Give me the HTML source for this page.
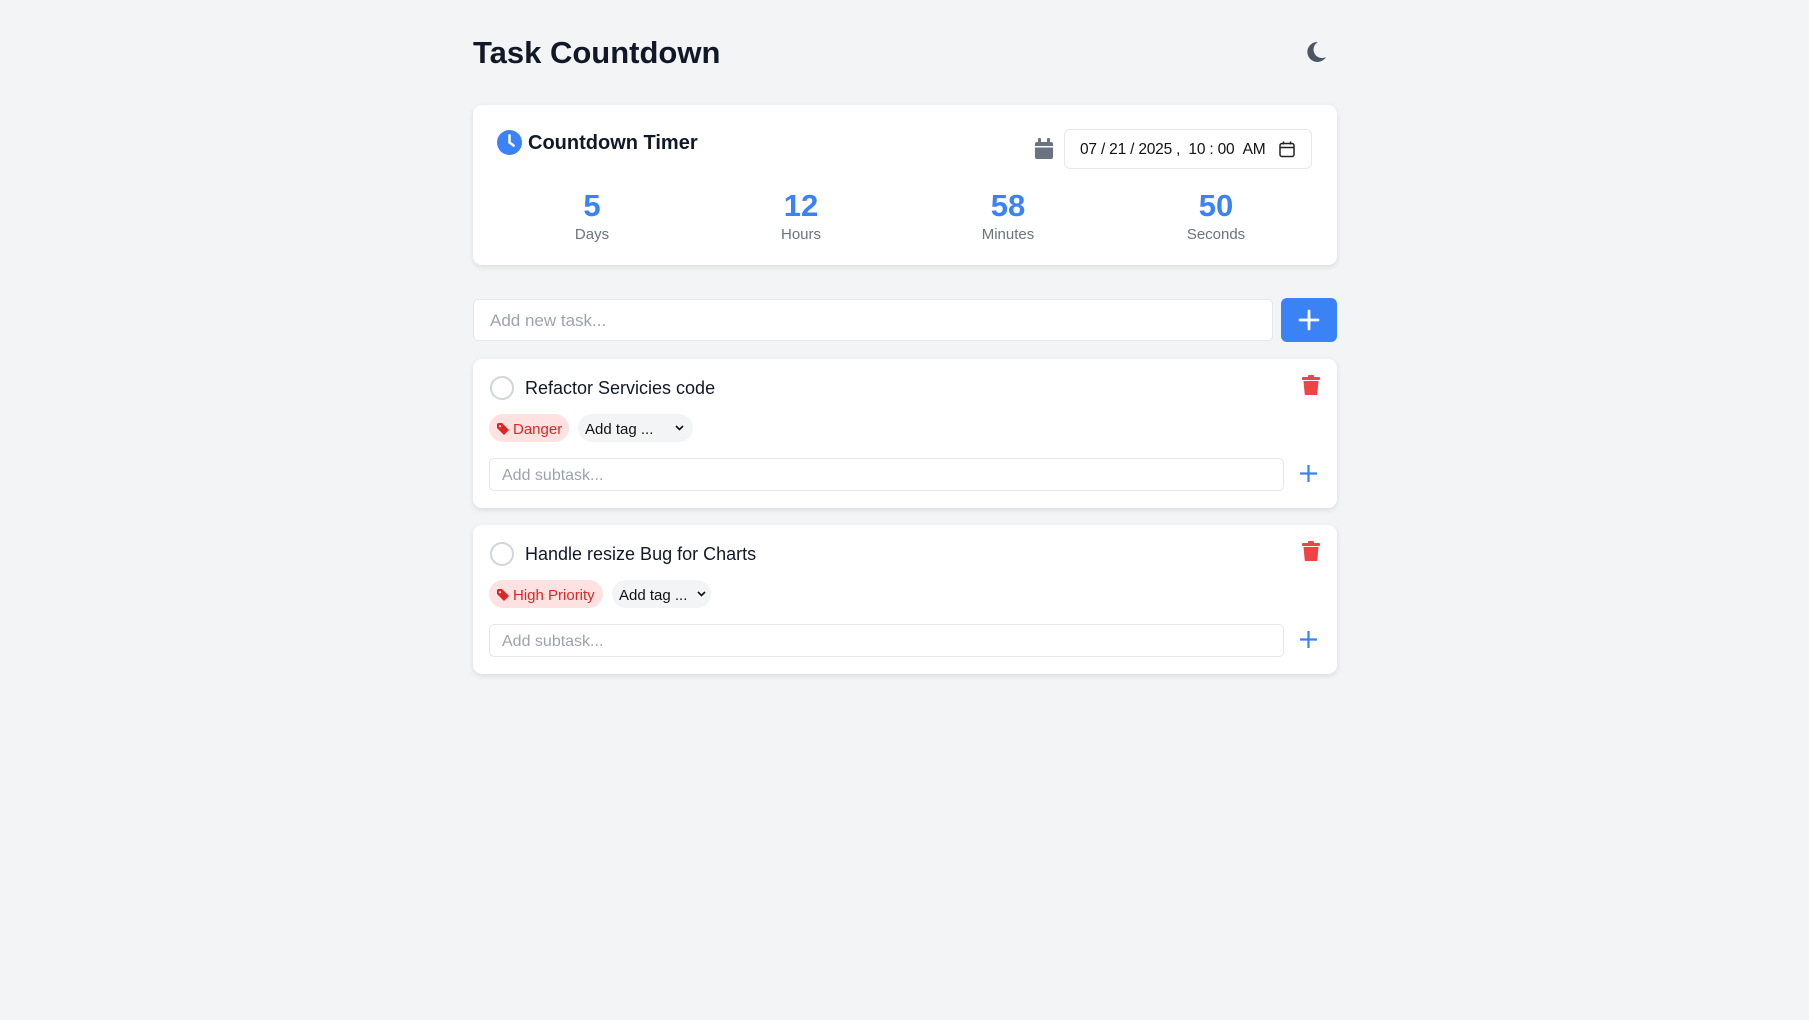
<!DOCTYPE html>
<html><head><meta charset="utf-8"><style>
*{box-sizing:border-box;margin:0;padding:0}
body{width:1809px;height:1020px;background:#f3f4f6;font-family:"Liberation Sans",sans-serif;position:relative;overflow:hidden;color:#111827}
.a{position:absolute}
.card{position:absolute;left:473px;width:864px;background:#fff;border-radius:9px;box-shadow:0 2px 6px rgba(0,0,0,.1)}
.num{position:absolute;top:83px;width:160px;text-align:center;color:#3b82f6;font-weight:bold;font-size:31px}
.lbl{position:absolute;top:121px;width:160px;text-align:center;color:#6b7280;font-size:15px}
.inp{position:absolute;background:#fff;border:1px solid #e5e7eb;border-radius:5px;color:#9ca3af;font-size:17px;padding-left:12px;display:flex;align-items:center}
</style></head><body>
<div class="a" style="left:473px;top:35px;font-size:31px;font-weight:bold;color:#111827">Task Countdown</div>
<svg class="a" style="left:1304px;top:40px" width="24" height="24" viewBox="0 0 24 24"><path d="M14 2A10 10 0 1 0 22 17A8 8 0 0 1 14 2Z" fill="#4b5563"/></svg>

<div class="card" style="top:105px;height:160px">
 <svg class="a" style="left:24px;top:25px" width="25" height="25" viewBox="0 0 24 24"><circle cx="12" cy="12" r="12" fill="#3b82f6"/><path d="M12 5v7l4 3" stroke="#fff" stroke-width="2.4" fill="none" stroke-linecap="round"/></svg>
 <div class="a" style="left:55px;top:27px;font-size:20px;font-weight:bold">Countdown Timer</div>
 <svg class="a" style="left:561px;top:33px" width="20" height="22" viewBox="0 0 20 22"><rect x="1" y="4" width="18" height="17" rx="2" fill="#6b7280"/><rect x="4" y="0" width="3" height="6" rx="1" fill="#6b7280"/><rect x="13" y="0" width="3" height="6" rx="1" fill="#6b7280"/><rect x="1" y="8" width="18" height="1.5" fill="#fff"/></svg>
 <div class="a" style="left:591px;top:24px;width:248px;height:40px;border:1px solid #e5e7eb;border-radius:6px;font-size:15.5px;color:#111;padding-left:15px;padding-top:1px;display:flex;align-items:center;letter-spacing:-0.2px">07 / 21 / 2025 ,&nbsp; 10 : 00 &nbsp;AM
  <svg style="position:absolute;right:16px;top:11px" width="16" height="17" viewBox="0 0 16 17"><rect x="1" y="2.5" width="14" height="13" rx="2" fill="none" stroke="#222" stroke-width="1.5"/><path d="M1 6.5h14M4.5 0.5v3M11.5 0.5v3" stroke="#222" stroke-width="1.5"/></svg></div>
 <div class="num" style="left:39px">5</div><div class="lbl" style="left:39px">Days</div>
 <div class="num" style="left:248px">12</div><div class="lbl" style="left:248px">Hours</div>
 <div class="num" style="left:455px">58</div><div class="lbl" style="left:455px">Minutes</div>
 <div class="num" style="left:663px">50</div><div class="lbl" style="left:663px">Seconds</div>
</div>

<div class="inp" style="left:473px;top:299px;width:800px;height:42px;padding-left:16px;padding-top:2px">Add new task...</div>
<div class="a" style="left:1281px;top:298px;width:56px;height:44px;background:#3b82f6;border-radius:6px"><svg style="position:absolute;left:17px;top:11px" width="22" height="22" viewBox="0 0 22 22"><path d="M11 2v18M2 11h18" stroke="#fff" stroke-width="2.8" stroke-linecap="round"/></svg></div>

<!-- task 1 -->
<div class="card" style="top:359px;height:149px">
 <div class="a" style="left:17px;top:17px;width:24px;height:24px;border:2px solid #d1d5db;border-radius:50%"></div>
 <div class="a" style="left:52px;top:19px;font-size:18px">Refactor Servicies code</div>
 <svg class="a" style="left:829px;top:16px" width="18" height="21" viewBox="0 0 18 21"><rect x="0" y="2" width="18" height="3" rx="1" fill="#ef4444"/><rect x="6" y="0" width="6" height="3" rx="1" fill="#ef4444"/><path d="M1.5 6h15l-1.3 14H2.8z" fill="#ef4444"/></svg>
 <div class="a" style="left:16px;top:55px;width:80px;height:28px;background:#fee2e2;border-radius:14px;color:#dc2626;font-size:15px;display:flex;align-items:center;padding-left:8px;padding-top:2px"><svg width="12" height="12" viewBox="0 0 12 12" style="margin-right:4px"><path d="M0 1v4l7 7 5-5-7-7H1z" fill="#dc2626"/><circle cx="3" cy="3.2" r="1.1" fill="#fee2e2"/></svg>Danger</div>
 <div class="a" style="left:105px;top:55px;width:115px;height:28px;background:#f3f4f6;border-radius:14px;color:#111;font-size:15px;display:flex;align-items:center;padding-left:7px;padding-top:2px">Add tag ...<svg style="position:absolute;right:9px;top:11px" width="9" height="6" viewBox="0 0 9 6"><path d="M1 1l3.5 3.5L8 1" stroke="#111" stroke-width="1.6" fill="none"/></svg></div>
 <div class="inp" style="left:16px;top:99px;width:795px;height:33px;font-size:16px;padding-top:2px">Add subtask...</div>
 <svg class="a" style="left:826px;top:105px" width="19" height="19" viewBox="0 0 19 19"><path d="M9.5 1v17M1 9.5h17" stroke="#3b82f6" stroke-width="2.2"/></svg>
</div>

<!-- task 2 -->
<div class="card" style="top:525px;height:149px">
 <div class="a" style="left:17px;top:17px;width:24px;height:24px;border:2px solid #d1d5db;border-radius:50%"></div>
 <div class="a" style="left:52px;top:19px;font-size:18px">Handle resize Bug for Charts</div>
 <svg class="a" style="left:829px;top:16px" width="18" height="21" viewBox="0 0 18 21"><rect x="0" y="2" width="18" height="3" rx="1" fill="#ef4444"/><rect x="6" y="0" width="6" height="3" rx="1" fill="#ef4444"/><path d="M1.5 6h15l-1.3 14H2.8z" fill="#ef4444"/></svg>
 <div class="a" style="left:16px;top:55px;width:114px;height:28px;background:#fee2e2;border-radius:14px;color:#dc2626;font-size:15px;display:flex;align-items:center;padding-left:8px;padding-top:2px"><svg width="12" height="12" viewBox="0 0 12 12" style="margin-right:4px"><path d="M0 1v4l7 7 5-5-7-7H1z" fill="#dc2626"/><circle cx="3" cy="3.2" r="1.1" fill="#fee2e2"/></svg>High Priority</div>
 <div class="a" style="left:139px;top:55px;width:99px;height:28px;background:#f3f4f6;border-radius:14px;color:#111;font-size:15px;display:flex;align-items:center;padding-left:7px;padding-top:2px">Add tag ...<svg style="position:absolute;right:5px;top:11px" width="9" height="6" viewBox="0 0 9 6"><path d="M1 1l3.5 3.5L8 1" stroke="#111" stroke-width="1.6" fill="none"/></svg></div>
 <div class="inp" style="left:16px;top:99px;width:795px;height:33px;font-size:16px;padding-top:2px">Add subtask...</div>
 <svg class="a" style="left:826px;top:105px" width="19" height="19" viewBox="0 0 19 19"><path d="M9.5 1v17M1 9.5h17" stroke="#3b82f6" stroke-width="2.2"/></svg>
</div>
</body></html>
